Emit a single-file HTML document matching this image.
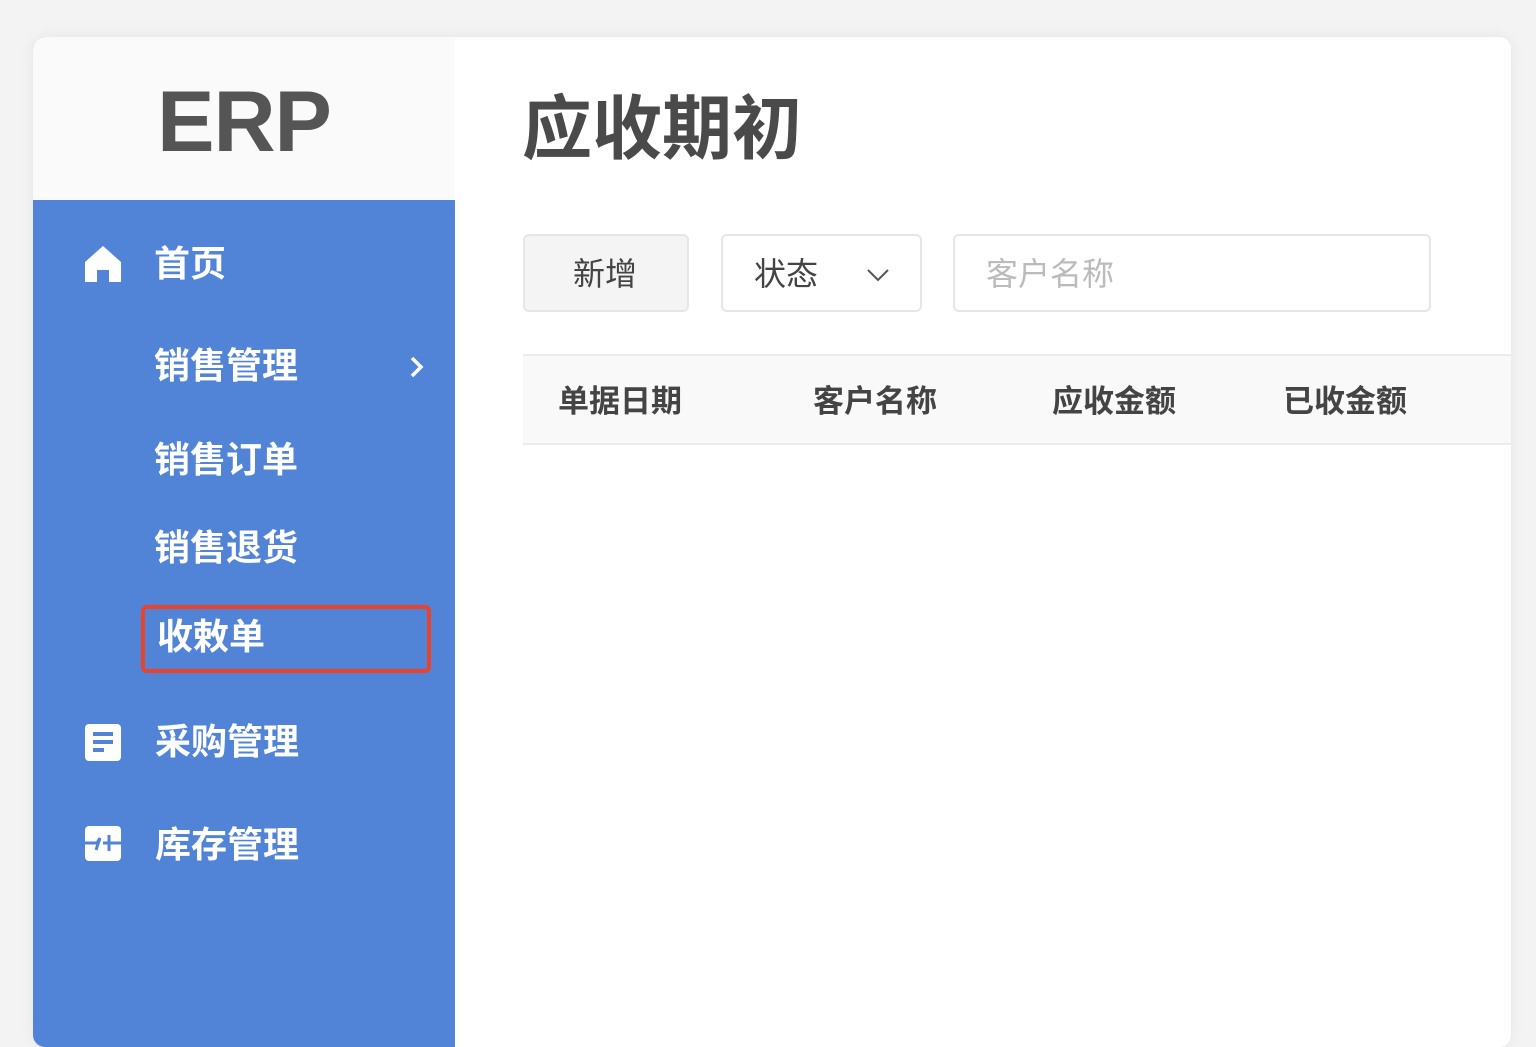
<!DOCTYPE html>
<html><head><meta charset="utf-8"><style>
*{margin:0;padding:0;box-sizing:border-box}
body{width:1536px;height:1024px;background:#f3f3f3;font-family:"Liberation Sans","Noto Sans CJK SC",sans-serif;position:relative;overflow:hidden}
.card{position:absolute;left:33px;top:37px;width:1478px;height:1010px;background:#fff;border-radius:12px;box-shadow:0 0 14px rgba(0,0,0,.06);overflow:hidden}
.side{position:absolute;left:0;top:0;width:422px;height:1010px;background:#5183d6}
.logo{position:absolute;left:0;top:0;width:422px;height:163px;background:#fafafa;color:#555;font-size:86px;font-weight:bold;text-align:center;line-height:170px;letter-spacing:-1px}
.m{position:absolute;color:#fff;font-size:36px;font-weight:bold;line-height:40px;white-space:nowrap}
.abs{position:absolute}
.t{position:absolute;color:#444;font-weight:bold;white-space:nowrap}
.box{position:absolute;border:2px solid #e6e6e6;border-radius:6px;background:#fff}
</style></head><body>
<div class="card">
 <div class="side">
  <div class="logo">ERP</div>
  <svg class="abs" style="left:51px;top:207px" width="38" height="38" viewBox="0 0 38 38"><path d="M19 2 L37 18 V38 H25 V26 H13 V38 H1 V18 Z" fill="#fff"/></svg>
  <div class="m" style="left:121px;top:207px">首页</div>
  <div class="m" style="left:121px;top:309px">销售管理</div>
  <svg class="abs" style="left:376px;top:318px" width="16" height="24" viewBox="0 0 16 24"><path d="M3 3 L12 12 L3 21" stroke="#fff" stroke-width="3.5" fill="none"/></svg>
  <div class="m" style="left:121px;top:403px">销售订单</div>
  <div class="m" style="left:121px;top:491px">销售退货</div>
  <div class="abs" style="left:108px;top:568px;width:290px;height:68px;border:4px solid #e8432c;border-radius:6px"></div>
  <div class="m" style="left:124px;top:580px">收敕单</div>
  <svg class="abs" style="left:52px;top:687px" width="36" height="37" viewBox="0 0 36 37"><rect x="0" y="0" width="36" height="37" rx="4" fill="#fff"/><rect x="8" y="8" width="20" height="4" fill="#5183d6"/><rect x="8" y="16" width="20" height="4" fill="#5183d6"/><rect x="8" y="24" width="11" height="4" fill="#5183d6"/></svg>
  <div class="m" style="left:122px;top:685px">采购管理</div>
  <svg class="abs" style="left:52px;top:789px" width="36" height="35" viewBox="0 0 36 35"><rect x="0" y="0" width="36" height="35" rx="4" fill="#fff"/><path d="M0 17 H12 L15 12 L11 24 M18 17 H36 M24 9 V25" stroke="#5183d6" stroke-width="3" fill="none"/></svg>
  <div class="m" style="left:122px;top:788px">库存管理</div>
 </div>
 <div class="t" style="left:489px;top:50px;font-size:70px;line-height:84px;color:#4a4a4a">应收期初</div>
 <div class="box" style="left:490px;top:197px;width:166px;height:78px;background:#f4f4f4"></div>
 <div class="t" style="left:540px;top:217px;font-size:32px;line-height:40px;font-weight:normal;color:#444">新增</div>
 <div class="box" style="left:688px;top:197px;width:201px;height:78px"></div>
 <div class="t" style="left:721px;top:217px;font-size:32px;line-height:40px;font-weight:normal;color:#444">状态</div>
 <svg class="abs" style="left:833px;top:230px" width="24" height="16" viewBox="0 0 24 16"><path d="M2 3 L12 13 L22 3" stroke="#555" stroke-width="2" fill="none"/></svg>
 <div class="box" style="left:920px;top:197px;width:478px;height:78px"></div>
 <div class="t" style="left:953px;top:217px;font-size:32px;line-height:40px;font-weight:normal;color:#bbb">客户名称</div>
 <div class="abs" style="left:490px;top:317px;width:990px;height:91px;background:#f9f9f9;border-top:2px solid #ebebeb;border-bottom:2px solid #ebebeb"></div>
 <div class="t" style="left:525px;top:345px;font-size:31px;line-height:40px">单据日期</div>
 <div class="t" style="left:780px;top:345px;font-size:31px;line-height:40px">客户名称</div>
 <div class="t" style="left:1019px;top:345px;font-size:31px;line-height:40px">应收金额</div>
 <div class="t" style="left:1250px;top:345px;font-size:31px;line-height:40px">已收金额</div>
</div>
</body></html>
